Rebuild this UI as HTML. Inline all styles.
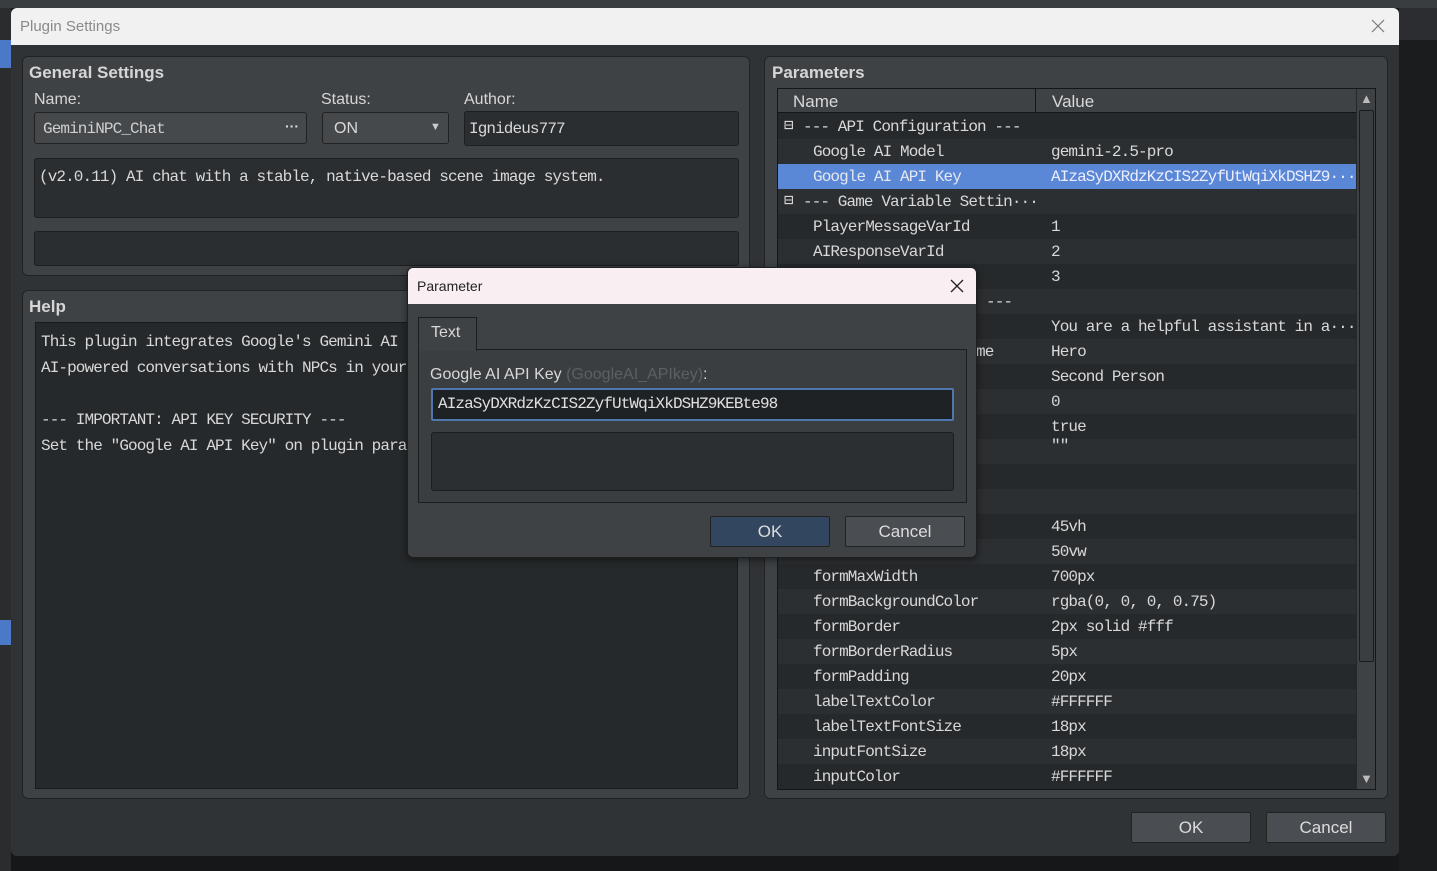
<!DOCTYPE html>
<html><head><meta charset="utf-8"><style>
*{box-sizing:border-box;margin:0;padding:0}
body{width:1437px;height:871px;overflow:hidden;background:#161718;position:relative;font-family:"Liberation Sans",sans-serif}
.a{position:absolute}
.mono{font-family:"Liberation Mono",monospace;font-size:16px;letter-spacing:-0.9px;color:#d8d8d8;white-space:nowrap}
.grp{position:absolute;background:#3e4245;border:1px solid #222;border-radius:6px}
.gt{position:absolute;font-weight:bold;font-size:17px;color:#d6d6d6}
.lbl{position:absolute;font-size:16px;color:#d6d6d6}
.fld{position:absolute;background:#2b2e31;border:1px solid #1c1e20;border-radius:3px}
.btn{position:absolute;background:#4a4e52;border:1px solid #222;border-radius:2px;color:#dcdcdc;font-size:17px;text-align:center}
.row{position:absolute;left:0;width:578px;height:25px}
.row span{position:absolute;top:4px}
</style></head><body>
<div class="a" style="left:0;top:0;width:1437px;height:8px;background:#3a3d40"></div>
<div class="a" style="left:0;top:8px;width:11px;height:863px;background:#2a2c2e"></div>
<div class="a" style="left:0;top:40px;width:11px;height:28px;background:#4c78c8"></div>
<div class="a" style="left:0;top:620px;width:11px;height:25px;background:#4c78c8"></div>
<div class="a" style="left:1399px;top:40px;width:38px;height:831px;background:#1b1c1d"></div>
<div class="a" style="left:1399px;top:8px;width:38px;height:32px;background:#2b2d30"></div>

<div class="a" style="left:11px;top:8px;width:1388px;height:848px;background:#303336;border-radius:6px;overflow:hidden">
  <div class="a" style="left:0;top:0;width:1388px;height:37px;background:#f1f1f1"></div>
  <div class="a" style="left:9px;top:10px;font-size:15px;color:#8a8a8a">Plugin Settings</div>
  <svg class="a" style="left:1360px;top:11px" width="14" height="14"><path d="M1 1L13 13M13 1L1 13" stroke="#777" stroke-width="1.2"/></svg>
</div>

<div class="grp" style="left:22px;top:56px;width:728px;height:220px"></div>
<div class="gt" style="left:29px;top:63px">General Settings</div>
<div class="lbl" style="left:34px;top:91px">Name:</div>
<div class="lbl" style="left:321px;top:91px">Status:</div>
<div class="lbl" style="left:464px;top:91px">Author:</div>
<div class="fld" style="left:34px;top:112px;width:273px;height:32px;background:#45494c;border-color:#222"></div>
<div class="a mono" style="left:43px;top:120px;color:#cfcfcf">GeminiNPC_Chat</div>
<div class="a" style="left:285px;top:118px;color:#ddd;font-size:14px;font-weight:bold">···</div>
<div class="fld" style="left:322px;top:112px;width:127px;height:32px;background:#45494c;border-color:#222"></div>
<div class="a" style="left:334px;top:120px;color:#d8d8d8;font-size:16px">ON</div>
<div class="a" style="left:430px;top:121px;color:#ccc;font-size:11px">▼</div>
<div class="fld" style="left:464px;top:111px;width:275px;height:35px"></div>
<div class="a mono" style="left:469px;top:120px">Ignideus777</div>
<div class="fld" style="left:34px;top:158px;width:705px;height:60px"></div>
<div class="a mono" style="left:39px;top:168px">(v2.0.11) AI chat with a stable, native-based scene image system.</div>
<div class="fld" style="left:34px;top:231px;width:705px;height:35px"></div>

<div class="grp" style="left:22px;top:290px;width:728px;height:509px"></div>
<div class="gt" style="left:29px;top:297px">Help</div>
<div class="a" style="left:35px;top:322px;width:703px;height:467px;background:#26292b;border:1px solid #181a1b"></div>
<div class="a mono" style="left:41px;top:329px;line-height:26px">This plugin integrates Google's Gemini AI<br>AI-powered conversations with NPCs in your<br><br>--- IMPORTANT: API KEY SECURITY ---<br>Set the "Google AI API Key" on plugin para</div>

<div class="grp" style="left:764px;top:56px;width:624px;height:743px"></div>
<div class="gt" style="left:772px;top:63px">Parameters</div>
<div class="a" style="left:777px;top:88px;width:599px;height:702px;background:#26292b;border:1px solid #151617;overflow:hidden">
  <div class="a" style="left:0;top:0;width:578px;height:24px;background:#3e4245;border-bottom:1px solid #151617"></div>
  <div class="a" style="left:257px;top:0;width:1px;height:24px;background:#151617"></div>
  <div class="a" style="left:15px;top:3px;color:#d8d8d8;font-size:17px">Name</div>
  <div class="a" style="left:274px;top:3px;color:#d8d8d8;font-size:17px">Value</div>
  <div class="a" style="left:0;top:25px;width:578px;height:677px">
    <div class="row" style="top:0;background:#26292b"><span class="mono" style="left:6px;top:1px">⊟</span><span class="mono" style="left:25px">--- API Configuration ---</span></div>
    <div class="row" style="top:25px;background:#2c2f32"><span class="mono" style="left:35px">Google AI Model</span><span class="mono" style="left:273px">gemini-2.5-pro</span></div>
    <div class="row" style="top:50px;background:#5a88d6"><span class="mono" style="left:35px;color:#e4e8f0">Google AI API Key</span><span class="mono" style="left:273px;color:#eef">AIzaSyDXRdzKzCIS2ZyfUtWqiXkDSHZ9···</span></div>
    <div class="row" style="top:75px;background:#2c2f32"><span class="mono" style="left:6px;top:1px">⊟</span><span class="mono" style="left:25px">--- Game Variable Settin···</span></div>
    <div class="row" style="top:100px;background:#26292b"><span class="mono" style="left:35px">PlayerMessageVarId</span><span class="mono" style="left:273px">1</span></div>
    <div class="row" style="top:125px;background:#2c2f32"><span class="mono" style="left:35px">AIResponseVarId</span><span class="mono" style="left:273px">2</span></div>
    <div class="row" style="top:150px;background:#26292b"><span class="mono" style="left:273px">3</span></div>
    <div class="row" style="top:175px;background:#2c2f32"><span class="mono" style="left:208px">---</span></div>
    <div class="row" style="top:200px;background:#26292b"><span class="mono" style="left:273px">You are a helpful assistant in a···</span></div>
    <div class="row" style="top:225px;background:#2c2f32"><span class="mono" style="left:198px">me</span><span class="mono" style="left:273px">Hero</span></div>
    <div class="row" style="top:250px;background:#26292b"><span class="mono" style="left:273px">Second Person</span></div>
    <div class="row" style="top:275px;background:#2c2f32"><span class="mono" style="left:273px">0</span></div>
    <div class="row" style="top:300px;background:#26292b"><span class="mono" style="left:273px">true</span></div>
    <div class="row" style="top:325px;background:#2c2f32"><span class="mono" style="left:273px;top:-2px">""</span></div>
    <div class="row" style="top:350px;background:#26292b"></div>
    <div class="row" style="top:375px;background:#2c2f32"></div>
    <div class="row" style="top:400px;background:#26292b"><span class="mono" style="left:273px">45vh</span></div>
    <div class="row" style="top:425px;background:#2c2f32"><span class="mono" style="left:273px">50vw</span></div>
    <div class="row" style="top:450px;background:#26292b"><span class="mono" style="left:35px">formMaxWidth</span><span class="mono" style="left:273px">700px</span></div>
    <div class="row" style="top:475px;background:#2c2f32"><span class="mono" style="left:35px">formBackgroundColor</span><span class="mono" style="left:273px">rgba(0, 0, 0, 0.75)</span></div>
    <div class="row" style="top:500px;background:#26292b"><span class="mono" style="left:35px">formBorder</span><span class="mono" style="left:273px">2px solid #fff</span></div>
    <div class="row" style="top:525px;background:#2c2f32"><span class="mono" style="left:35px">formBorderRadius</span><span class="mono" style="left:273px">5px</span></div>
    <div class="row" style="top:550px;background:#26292b"><span class="mono" style="left:35px">formPadding</span><span class="mono" style="left:273px">20px</span></div>
    <div class="row" style="top:575px;background:#2c2f32"><span class="mono" style="left:35px">labelTextColor</span><span class="mono" style="left:273px">#FFFFFF</span></div>
    <div class="row" style="top:600px;background:#26292b"><span class="mono" style="left:35px">labelTextFontSize</span><span class="mono" style="left:273px">18px</span></div>
    <div class="row" style="top:625px;background:#2c2f32"><span class="mono" style="left:35px">inputFontSize</span><span class="mono" style="left:273px">18px</span></div>
    <div class="row" style="top:650px;background:#26292b"><span class="mono" style="left:35px">inputColor</span><span class="mono" style="left:273px">#FFFFFF</span></div>
  </div>
  <div class="a" style="left:579px;top:0;width:19px;height:700px;background:#3e4245"></div>
  <div class="a" style="left:582px;top:2px;color:#bbb;font-size:13px">▲</div>
  <div class="a" style="left:582px;top:682px;color:#bbb;font-size:13px">▼</div>
  <div class="a" style="left:581px;top:21px;width:15px;height:552px;background:#3a3e41;border:1px solid #1a1b1c;border-radius:2px"></div>
</div>

<div class="btn" style="left:1131px;top:812px;width:120px;height:31px;line-height:29px">OK</div>
<div class="btn" style="left:1266px;top:812px;width:120px;height:31px;line-height:29px">Cancel</div>

<div class="a" style="left:407px;top:267px;width:570px;height:291px;background:#3e4245;border:1px solid #1e1f20;border-radius:6px;overflow:hidden;box-shadow:0 2px 8px rgba(0,0,0,.5)">
  <div class="a" style="left:0;top:0;width:570px;height:36px;background:#f9eff2"></div>
  <div class="a" style="left:9px;top:10px;font-size:14px;color:#222">Parameter</div>
  <svg class="a" style="left:542px;top:11px" width="14" height="14"><path d="M1 1L13 13M13 1L1 13" stroke="#222" stroke-width="1.3"/></svg>
  <div class="a" style="left:10px;top:81px;width:549px;height:154px;background:#3a3e41;border:1px solid #1b1d1e"></div>
  <div class="a" style="left:10px;top:49px;width:59px;height:34px;background:#3e4245;border:1px solid #1b1d1e;border-bottom:none"></div>
  <div class="a" style="left:23px;top:56px;font-size:16px;color:#d8d8d8">Text</div>
  <div class="a" style="left:22px;top:98px;font-size:16px;color:#d8d8d8">Google AI API Key <span style="color:#5c6064">(GoogleAI_APIkey)</span>:</div>
  <div class="a" style="left:23px;top:120px;width:523px;height:33px;background:#1f2224;border:2px solid #4f77ad;border-radius:2px"></div>
  <div class="a mono" style="left:30px;top:127px;color:#e0e0e0">AIzaSyDXRdzKzCIS2ZyfUtWqiXkDSHZ9KEBte98</div>
  <div class="a" style="left:23px;top:164px;width:523px;height:59px;background:#2c2f32;border:1px solid #1b1d1e;border-radius:3px"></div>
  <div class="btn" style="left:302px;top:248px;width:120px;height:31px;line-height:29px;background:#33465f">OK</div>
  <div class="btn" style="left:437px;top:248px;width:120px;height:31px;line-height:29px">Cancel</div>
</div>
</body></html>
